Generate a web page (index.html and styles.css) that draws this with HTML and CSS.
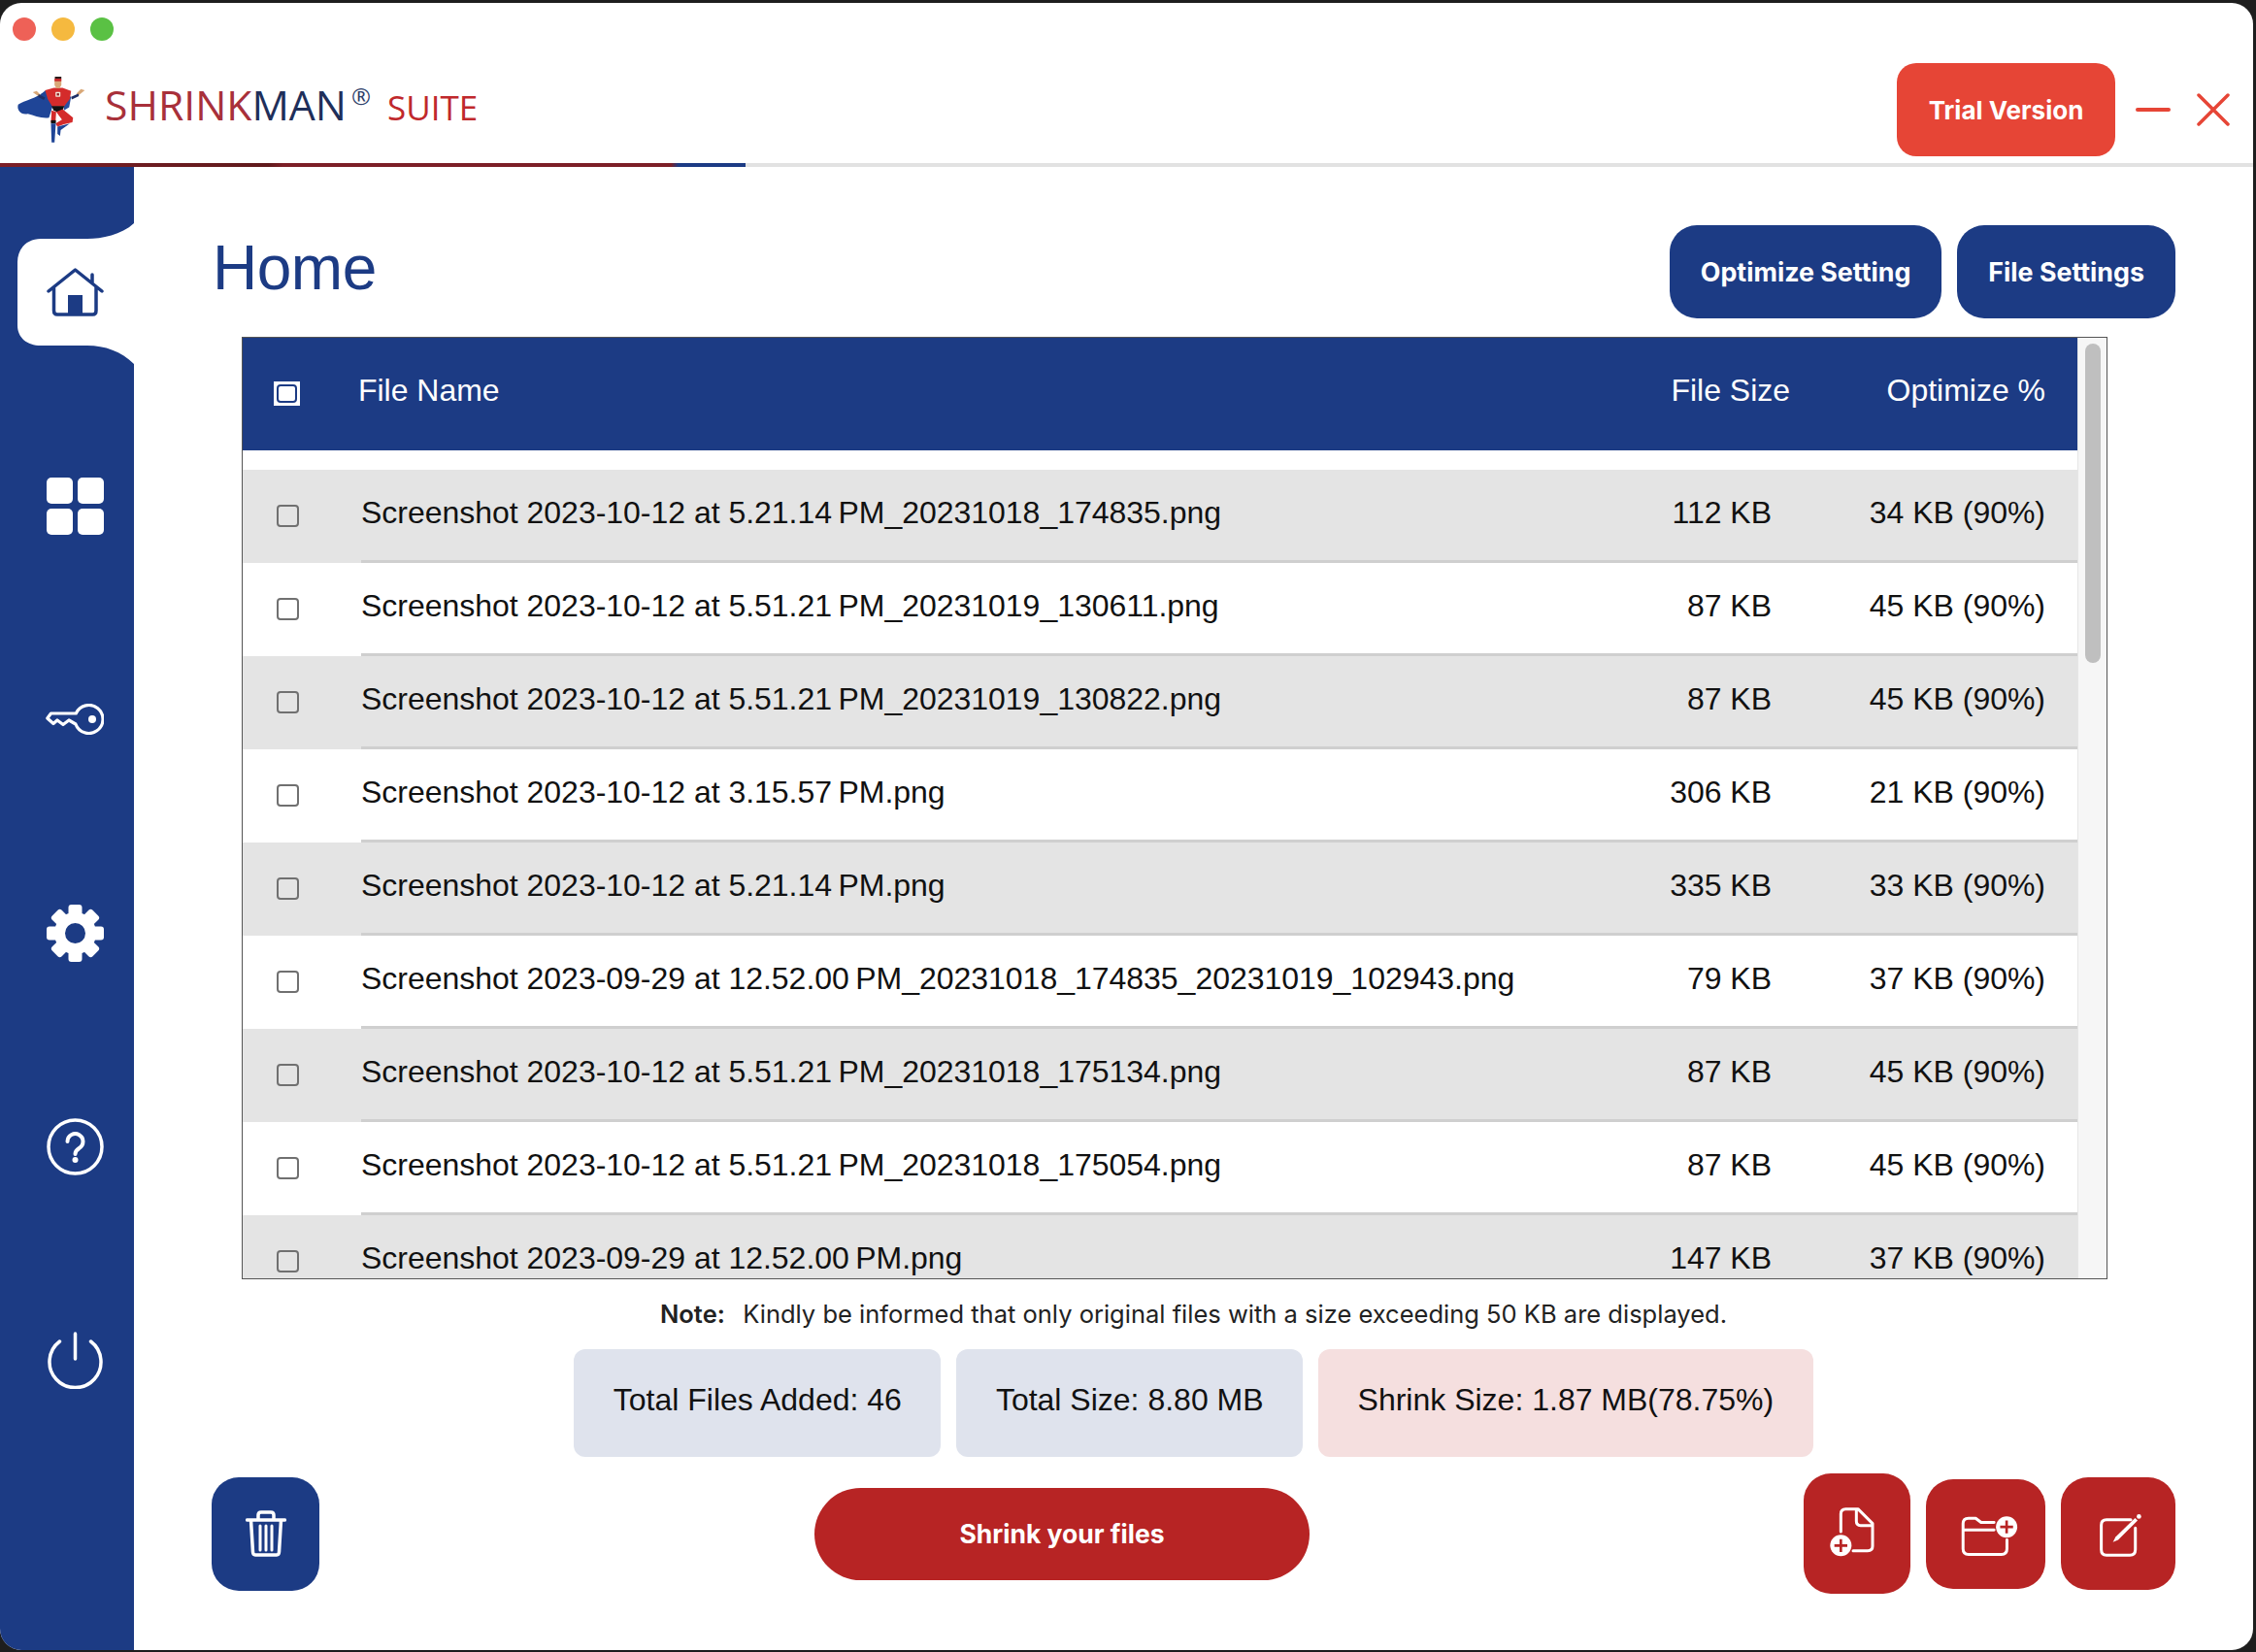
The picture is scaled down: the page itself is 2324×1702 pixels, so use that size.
FILE: index.html
```html
<!DOCTYPE html>
<html lang="en">
<head>
  <meta charset="UTF-8">
  <title>Shrinkman Suite</title>
  <link rel="stylesheet" href="styles.css">
</head>
<body>
<div class="window">
  <header class="topbar">
    <div class="traffic">
      <span class="light red"></span>
      <span class="light amber"></span>
      <span class="light green"></span>
    </div>
    <div class="brandrow">
      <div class="brand">
        <svg class="hero" viewBox="50 80 215 215">
          <path fill="#1f4597" d="M140 128C110 155 75 158 55 172C50 190 65 205 85 200C105 205 125 215 150 212L165 165Z"/>
          <path fill="#2a4f9f" d="M195 140L218 148L212 180L196 190Z"/>
          <path fill="#d9a878" d="M100 134L112 130L124 142L120 148ZM260 128L248 124L234 138L240 144Z"/>
          <path fill="#1e2f66" d="M118 140L138 150L134 158L116 148ZM240 138L218 148L220 156L242 146Z"/>
          <path fill="#d42b2b" d="M138 128L165 120L192 120L218 130L214 155L196 178L160 178L146 155Z"/>
          <rect fill="#f2e6d8" x="170" y="133" width="15" height="15" rx="2"/>
          <rect fill="#8c1c1c" x="174" y="137" width="7" height="7"/>
          <path fill="#d9a878" d="M167 96H188V112L182 122H173L167 112Z"/>
          <rect fill="#2b1a1a" x="168" y="86" width="20" height="7"/>
          <rect fill="#c8262a" x="167" y="92" width="21" height="8"/>
          <path fill="#111" d="M158 176H197L192 190L178 196L164 190Z"/>
          <path fill="#d42b2b" d="M192 186L224 212L222 226L196 232L176 240L170 230L190 218L172 194Z"/>
          <path fill="#d42b2b" d="M158 190L172 194L170 226L156 226Z"/>
          <rect fill="#111" x="156" y="220" width="15" height="10"/>
          <path fill="#1f4597" d="M156 230H171L167 288H158ZM176 240L214 230L186 250L184 268L176 262Z"/>
        </svg>
        <div class="wordmark">
          <span class="w-shrink">SHRINK</span><span class="w-man">MAN</span>
          <span class="w-reg">®</span>
          <span class="w-suite">SUITE</span>
        </div>
      </div>
      <div class="winactions">
        <button class="trial">Trial Version</button>
        <svg class="win-min" viewBox="0 0 36 4"><path d="M2 2H34"/></svg>
        <svg class="win-close" viewBox="0 0 34 34"><path d="M2 2L32 32M32 2L2 32"/></svg>
      </div>
    </div>
  </header>
  <div class="progress"><div class="progress-fill"></div></div>

  <div class="main">
    <nav class="sidebar">
      <a class="nav-item active">
        <svg class="tab" viewBox="0 0 138 145"><path d="M138 0C125 12 105 16 90 16H42C28 16 18 26 18 40V105C18 118 28 126 42 126H90C108 126 125 132 138 145Z"/></svg>
        <svg class="ico ico-home" viewBox="0 0 59 50">
          <path d="M2 24L29.5 2L57 24M47 7V16M7.5 20V44Q7.5 48 11 48H47.5Q51 48 51 44V20"/>
          <rect x="22" y="28" width="15" height="20"/>
        </svg>
      </a>
      <a class="nav-item">
        <svg class="ico" viewBox="0 0 59 59">
          <rect class="solid" x="0" y="0" width="27" height="27" rx="5"/>
          <rect class="solid" x="32" y="0" width="27" height="27" rx="5"/>
          <rect class="solid" x="0" y="32" width="27" height="27" rx="5"/>
          <rect class="solid" x="32" y="32" width="27" height="27" rx="5"/>
        </svg>
      </a>
      <a class="nav-item">
        <svg class="ico ico-key" viewBox="0 0 60 32">
          <path d="M31.3 10A14.5 14.5 0 1 1 30.9 21L24 17L18 21.5L12 17L8 20.5L1.8 15L5.5 10Z"/>
          <circle class="solid" cx="48" cy="16" r="4"/>
        </svg>
      </a>
      <a class="nav-item">
        <svg class="ico" viewBox="0 0 59 59">
          <circle class="gear-ring" cx="29.5" cy="29.5" r="16"/>
          <rect class="solid" x="22.5" y="0" width="14" height="14" rx="3"/>
          <rect class="solid" x="22.5" y="0" width="14" height="14" rx="3" transform="rotate(45 29.5 29.5)"/>
          <rect class="solid" x="22.5" y="0" width="14" height="14" rx="3" transform="rotate(90 29.5 29.5)"/>
          <rect class="solid" x="22.5" y="0" width="14" height="14" rx="3" transform="rotate(135 29.5 29.5)"/>
          <rect class="solid" x="22.5" y="0" width="14" height="14" rx="3" transform="rotate(180 29.5 29.5)"/>
          <rect class="solid" x="22.5" y="0" width="14" height="14" rx="3" transform="rotate(225 29.5 29.5)"/>
          <rect class="solid" x="22.5" y="0" width="14" height="14" rx="3" transform="rotate(270 29.5 29.5)"/>
          <rect class="solid" x="22.5" y="0" width="14" height="14" rx="3" transform="rotate(315 29.5 29.5)"/>
        </svg>
      </a>
      <a class="nav-item">
        <svg class="ico ico-line" viewBox="0 0 59 59">
          <circle cx="29.5" cy="29.5" r="27.5"/>
          <path class="qmark" d="M21.5 24A8 8 0 1 1 33.5 31C30.5 33 29.5 34 29.5 37"/>
          <circle class="solid" cx="29.5" cy="43" r="3"/>
        </svg>
      </a>
      <a class="nav-item">
        <svg class="ico ico-line" viewBox="0 0 58 59">
          <path d="M29 2V28M13 10A26.5 26.5 0 1 0 45 10"/>
        </svg>
      </a>
    </nav>

    <main class="content">
      <div class="pagehead">
        <h1 class="title">Home</h1>
        <div class="headbtns">
          <button class="btn-blue">Optimize Setting</button>
          <button class="btn-blue">File Settings</button>
        </div>
      </div>

      <div class="tablebox">
        <div class="tablewrap">
          <table class="files">
            <colgroup>
              <col class="c-check"><col><col class="c-size"><col class="c-opt">
            </colgroup>
            <thead>
              <tr>
                <th class="cell-check"><span class="check-all"><input type="checkbox" class="check check-head"></span></th>
                <th class="th-name">File Name</th>
                <th class="th-size">File Size</th>
                <th class="th-opt">Optimize %</th>
              </tr>
            </thead>
            <tbody>
              <tr class="spacer"><td colspan="4"></td></tr>
              <tr class="row"><td class="cell-check"><input type="checkbox" class="check"></td><td class="name">Screenshot 2023-10-12 at 5.21.14&#8239;PM_20231018_174835.png</td><td class="size">112 KB</td><td class="opt">34 KB (90%)</td></tr>
              <tr class="row"><td class="cell-check"><input type="checkbox" class="check"></td><td class="name">Screenshot 2023-10-12 at 5.51.21&#8239;PM_20231019_130611.png</td><td class="size">87 KB</td><td class="opt">45 KB (90%)</td></tr>
              <tr class="row"><td class="cell-check"><input type="checkbox" class="check"></td><td class="name">Screenshot 2023-10-12 at 5.51.21&#8239;PM_20231019_130822.png</td><td class="size">87 KB</td><td class="opt">45 KB (90%)</td></tr>
              <tr class="row"><td class="cell-check"><input type="checkbox" class="check"></td><td class="name">Screenshot 2023-10-12 at 3.15.57&#8239;PM.png</td><td class="size">306 KB</td><td class="opt">21 KB (90%)</td></tr>
              <tr class="row"><td class="cell-check"><input type="checkbox" class="check"></td><td class="name">Screenshot 2023-10-12 at 5.21.14&#8239;PM.png</td><td class="size">335 KB</td><td class="opt">33 KB (90%)</td></tr>
              <tr class="row"><td class="cell-check"><input type="checkbox" class="check"></td><td class="name">Screenshot 2023-09-29 at 12.52.00&#8239;PM_20231018_174835_20231019_102943.png</td><td class="size">79 KB</td><td class="opt">37 KB (90%)</td></tr>
              <tr class="row"><td class="cell-check"><input type="checkbox" class="check"></td><td class="name">Screenshot 2023-10-12 at 5.51.21&#8239;PM_20231018_175134.png</td><td class="size">87 KB</td><td class="opt">45 KB (90%)</td></tr>
              <tr class="row"><td class="cell-check"><input type="checkbox" class="check"></td><td class="name">Screenshot 2023-10-12 at 5.51.21&#8239;PM_20231018_175054.png</td><td class="size">87 KB</td><td class="opt">45 KB (90%)</td></tr>
              <tr class="row"><td class="cell-check"><input type="checkbox" class="check"></td><td class="name">Screenshot 2023-09-29 at 12.52.00&#8239;PM.png</td><td class="size">147 KB</td><td class="opt">37 KB (90%)</td></tr>
            </tbody>
          </table>
        </div>
        <div class="scrollbar"><div class="thumb"></div></div>
      </div>

      <p class="note"><b>Note:</b>&nbsp; Kindly be informed that only original files with a size exceeding 50 KB are displayed.</p>

      <div class="stats">
        <div class="stat">Total Files Added: 46</div>
        <div class="stat">Total Size: 8.80 MB</div>
        <div class="stat stat-red">Shrink Size: 1.87 MB(78.75%)</div>
      </div>

      <div class="footer">
        <button class="iconbtn btn-trash">
          <svg class="ico-trash" viewBox="0 0 42 48">
            <path d="M1.5 10H40.5M13 9V5Q13 2 16 2H26Q29 2 29 5V9M5.5 10L7.5 43Q7.7 46 10 46H32Q34.3 46 34.5 43L36.5 10"/>
            <path class="bars" d="M15 16V41M21 16V41M27 16V41"/>
          </svg>
        </button>
        <button class="shrink">Shrink your files</button>
        <div class="footactions">
          <button class="iconbtn btn-file">
            <svg class="ico-fill" viewBox="172 117 330 372">
              <path d="M287 297V242Q287 227 302 227H340L385 272V342Q385 356 370 356H325M335 228V265Q335 278 348 278H385"/>
              <circle class="plus-bg" cx="287" cy="340" r="33"/>
              <path class="plus" d="M287 320V360M267 340H307"/>
            </svg>
          </button>
          <button class="iconbtn btn-folder">
            <svg class="ico-fill" viewBox="551 135 370 338">
              <path d="M762 268H722L705 255H683Q666 255 666 272V350Q666 367 683 367H785Q802 367 802 350V322M666 291H762"/>
              <circle class="plus-bg" cx="801" cy="282" r="33"/>
              <path class="plus" d="M801 262V302M781 282H821"/>
            </svg>
          </button>
          <button class="iconbtn btn-edit">
            <svg class="ico-fill" viewBox="970 129 352 347">
              <path d="M1185 260H1110Q1094 260 1094 276V352Q1094 369 1110 369H1182Q1199 369 1199 352V285"/>
              <path class="pen" d="M1130 329L1138 313L1198 255L1206 262L1146 322Z"/>
              <circle class="plus-bg" cx="1210" cy="250" r="7"/>
            </svg>
          </button>
        </div>
      </div>
    </main>
  </div>
</div>
</body>
</html>
```

FILE: styles.css
```css
* { box-sizing: border-box; }
body { margin: 0; background: #1e1e1e; font-family: "Liberation Sans", Arial, sans-serif; }
button { border: 0; color: #fff; font-family: Inter, "Liberation Sans", sans-serif; font-weight: 700; padding: 0; }

.window {
  margin-top: 3px;
  width: 2321px;
  height: 1697px;
  background: #fff;
  border-radius: 22px;
  overflow: hidden;
  display: flex;
  flex-direction: column;
}

/* top bar */
.topbar { padding-top: 15px; height: 165px; }
.traffic { display: flex; gap: 16px; padding-left: 13px; height: 24px; }
.light { width: 24px; height: 24px; border-radius: 50%; }
.red { background: #ee6157; }
.amber { background: #f5b93f; }
.green { background: #5ac144; }

.brandrow { display: flex; justify-content: space-between; align-items: center; margin-top: 23px; height: 96px; }
.brand { display: flex; align-items: center; padding-left: 17px; }
.hero { width: 72px; height: 72px; }
.wordmark { margin: 0 0 12px 19px; font-family: "Open Sans", sans-serif; font-size: 42.7px; white-space: nowrap; display: flex; align-items: baseline; }
.w-shrink { color: #a8303a; }
.w-man { color: #1f2f5a; }
.w-reg { color: #2f3f6a; font-size: 24px; margin-left: 5px; position: relative; top: -16px; }
.w-suite { color: #c0282c; font-size: 35px; margin-left: 17px; }

.winactions { display: flex; align-items: center; padding-right: 24px; }
.trial { width: 225px; height: 96px; background: #e64536; border-radius: 20px; font-size: 26px; }
.win-min { width: 36px; height: 4px; margin-left: 21px; }
.win-min path { stroke: #e64536; stroke-width: 4; stroke-linecap: round; }
.win-close { width: 34px; height: 34px; margin-left: 27px; }
.win-close path { stroke: #e64536; stroke-width: 3.5; stroke-linecap: round; }

.progress { height: 4px; background: #e2e2e2; }
.progress-fill { width: 768px; height: 4px; background: linear-gradient(90deg, #7c1f27 0, #5f1a1c 36%, #7c1f27 38%, #7c1f27 90%, #1c3b84 91%); }

.main { flex: 1; display: flex; min-height: 0; }

/* sidebar */
.sidebar { width: 138px; background: #1c3b84; padding-top: 19px; }
.nav-item { position: relative; display: flex; justify-content: center; align-items: center; height: 220px; padding-left: 16px; }
.tab { position: absolute; left: 0; top: 39px; width: 138px; height: 145px; }
.tab path { fill: #fff; }
.ico { position: relative; width: 59px; height: 59px; }
.ico .solid { fill: #fff; }
.ico-home { height: 50px; }
.ico-home path { fill: none; stroke: #1c3b84; stroke-width: 3.5; stroke-linecap: round; stroke-linejoin: round; }
.ico-home rect { fill: #1c3b84; }
.ico-key { width: 60px; height: 32px; }
.ico-key path { fill: none; stroke: #fff; stroke-width: 3.2; stroke-linejoin: round; }
.gear-ring { fill: none; stroke: #fff; stroke-width: 11; }
.ico-line circle, .ico-line path { fill: none; stroke: #fff; stroke-width: 3.5; stroke-linecap: round; }
.ico-line .qmark { stroke-width: 4; }
.ico-line .solid { stroke: none; fill: #fff; }

/* content */
.content { flex: 1; padding: 60px 80px 0; min-width: 0; }
.pagehead { display: flex; justify-content: space-between; align-items: center; height: 96px; }
.title { margin: 0 0 8px 1px; font-size: 64px; font-weight: 400; color: #1c3b84; letter-spacing: -0.5px; }
.headbtns { display: flex; gap: 16px; }
.btn-blue { height: 96px; background: #1c3b84; border-radius: 28px; font-size: 26.8px; padding: 0 32px; }

.tablebox {
  display: flex;
  width: 1922px;
  height: 971px;
  margin: 19px 0 0 31px;
  border: 1px solid #555;
}
.tablewrap { flex: 1; overflow: hidden; }
.files { width: 100%; border-collapse: separate; border-spacing: 0; table-layout: fixed; font-size: 32px; color: #111; letter-spacing: -0.02px; }
.c-check { width: 122px; }
.c-size { width: 300px; }
.c-opt { width: 280px; }
.files th { height: 116px; background: #1c3b84; color: #fff; font-weight: 400; padding: 0 0 7px; }
.th-name { text-align: left; text-indent: -3px; }
.th-size, .th-opt { text-align: right; }
.files th.th-size { padding-right: 16px; }
.files th.th-opt { padding-right: 33px; }
.files th.cell-check { padding: 0 0 5px 32px; text-align: left; }

.spacer td { height: 20px; padding: 0; }
.row td { height: 96px; padding: 0 0 5px; border-bottom: 3px solid #cfcfcf; white-space: nowrap; }
.row:nth-child(even) { background: #e4e4e4; }
.row td.cell-check { padding: 0 0 2px 35px; border-bottom: 0; }
.name { padding-left: 1px; }
.size, .opt { text-align: right; }
.row .size { padding-right: 35px; }
.row .opt { padding-right: 33px; }

.check {
  appearance: none;
  display: block;
  margin: 0;
  width: 23px;
  height: 23px;
  border: 2px solid #707070;
  border-radius: 4px;
  background: transparent;
}
.check-all { display: inline-block; background: #fff; padding: 3px; vertical-align: middle; }
.check-head { width: 21px; height: 19px; border-color: #1c3b84; border-radius: 4px; background: #fff; }

.scrollbar { width: 30px; background: #f6f6f6; border-left: 1px solid #e6e6e6; padding: 6px 6px 0 7px; }
.thumb { height: 329px; background: #bfbfbf; border-radius: 8px; }

.note { margin: 18px 0 0; height: 36px; line-height: 36px; text-align: center; font-family: Inter, sans-serif; font-size: 25.5px; color: #222; }
.note b { font-weight: 600; margin-right: 4px; }

.stats { display: flex; justify-content: center; gap: 16px; margin-top: 18px; }
.stat { height: 111px; padding: 0 40.5px 6px; display: flex; align-items: center; font-size: 32px; color: #111; background: #dfe3ed; border-radius: 12px; }
.stat-red { background: #f5dfdf; }

/* bottom buttons */
.footer { display: flex; align-items: center; margin-top: 17px; height: 124px; }
.iconbtn { display: flex; align-items: center; justify-content: center; border-radius: 28px; background: #b72424; }
.btn-trash { width: 111px; height: 117px; background: #1c3b84; }
.ico-trash { width: 42px; height: 48px; }
.ico-trash path { fill: none; stroke: #fff; stroke-width: 3.5; stroke-linecap: round; stroke-linejoin: round; }
.ico-trash .bars { stroke-width: 3; }
.shrink { width: 510px; height: 95px; margin-left: 510px; background: #b72424; border-radius: 48px; font-size: 26.5px; }
.footactions { display: flex; align-items: center; gap: 16px; margin-left: auto; }
.btn-file { width: 110px; height: 124px; }
.btn-folder { width: 123px; height: 113px; }
.btn-edit { width: 118px; height: 116px; }
.ico-fill { width: 100%; height: 100%; }
.ico-fill path { fill: none; stroke: #fff; stroke-width: 9; stroke-linecap: round; stroke-linejoin: round; }
.ico-fill .plus-bg { fill: #fff; }
.ico-fill .plus { stroke: #b72424; stroke-width: 8; stroke-linecap: butt; }
.ico-fill .pen { fill: #fff; stroke: none; }
```
